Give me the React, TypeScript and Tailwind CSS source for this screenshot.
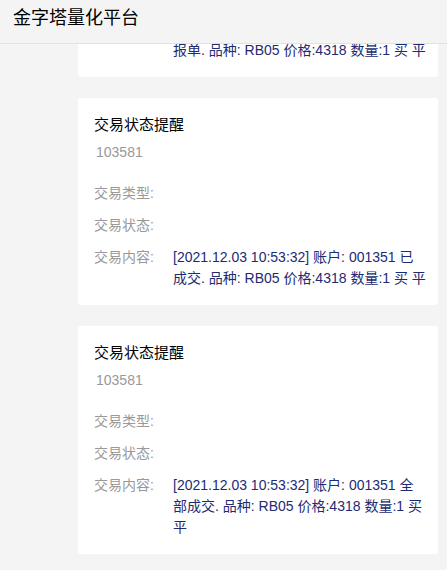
import React from 'react'

interface Notice {
  id: string
  content: string
}

const notices: Notice[] = [
  { id: '103581', content: '[2021.12.03 10:53:32] 账户: 001351 已报单. 品种: RB05 价格:4318 数量:1 买 平' },
  { id: '103581', content: '[2021.12.03 10:53:32] 账户: 001351 已成交. 品种: RB05 价格:4318 数量:1 买 平' },
  { id: '103581', content: '[2021.12.03 10:53:32] 账户: 001351 全部成交. 品种: RB05 价格:4318 数量:1 买 平' },
]

function Row({ label, value }: { label: string; value?: string }) {
  return (
    <div className="flex text-[14px] leading-[21px]">
      <div className="w-[79px] shrink-0 text-[#999999]">{label}</div>
      <div className="flex-1 text-[#1d2b73] break-all">{value}</div>
    </div>
  )
}

function NoticeCard({ notice }: { notice: Notice }) {
  return (
    <div className="bg-white rounded-[3px] pt-4 pb-4 pl-4 pr-[12px]">
      <div className="text-[15px] leading-[22px] text-black">交易状态提醒</div>
      <div className="mt-[6px] pl-[2px] text-[14px] leading-[20px] text-[#999999]">{notice.id}</div>
      <div className="mt-[21px] flex flex-col gap-[11px]">
        <Row label="交易类型:" />
        <Row label="交易状态:" />
        <Row label="交易内容:" value={notice.content} />
      </div>
    </div>
  )
}

export default function App() {
  return (
    <div
      className="relative h-[570px] w-[447px] overflow-hidden bg-[#f4f4f4]"
      style={{ fontFamily: '"Liberation Sans", "Noto Sans CJK SC", sans-serif' }}
    >
      <div className="absolute left-0 right-0 top-0 z-10 h-[44px] bg-[#f4f4f4] border-b border-[#e2e2e2] pl-[13px] pt-[6px]">
        <span className="block text-[18px] leading-[24px] text-black">金字塔量化平台</span>
      </div>
      <div className="mt-[-130px] pl-[78px] pr-[9px] flex flex-col gap-[21px]">
        {notices.map((n, i) => (
          <NoticeCard key={i} notice={n} />
        ))}
      </div>
    </div>
  )
}
